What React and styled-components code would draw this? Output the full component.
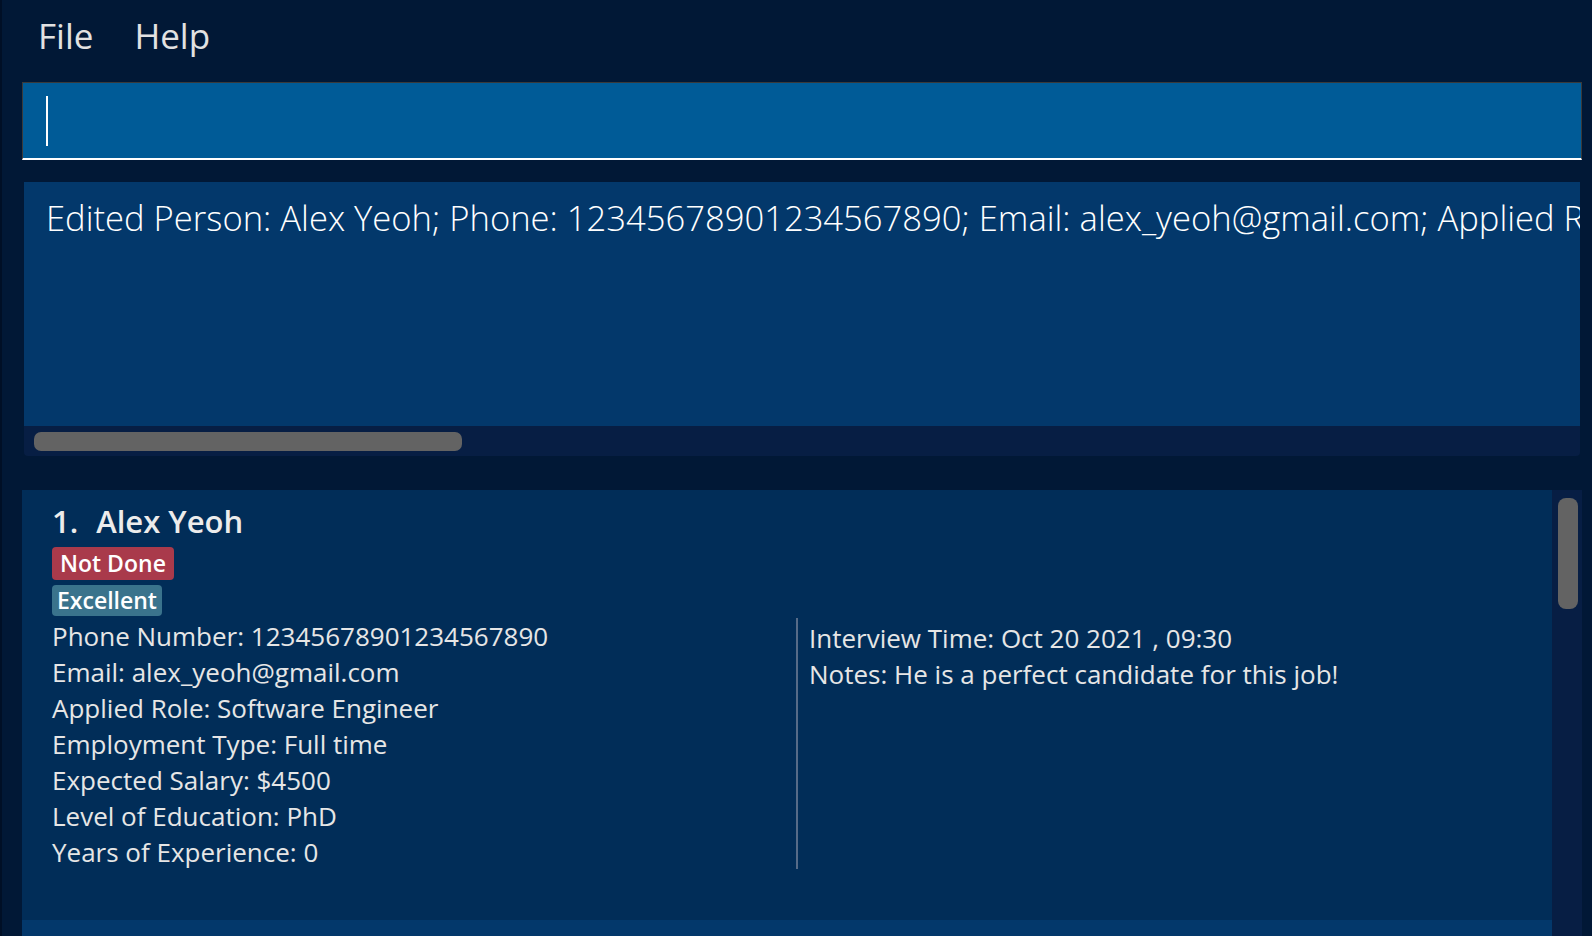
import React from "react";
import styled, { createGlobalStyle } from "styled-components";

const GlobalStyle = createGlobalStyle`
  html, body {
    margin: 0;
    padding: 0;
    background: #011836;
    overflow: hidden;
  }
  * {
    box-sizing: border-box;
  }
`;

const Window = styled.div`
  width: 1592px;
  height: 936px;
  background: #011836;
  border-left: 2px solid #000f26;
  display: flex;
  flex-direction: column;
  overflow: hidden;
`;

const MenuBar = styled.div`
  height: 72px;
  display: flex;
  align-items: flex-start;
  gap: 41px;
  padding: 8px 0 0 36px;
  font-family: "Open Sans", sans-serif;
  font-size: 35px;
  color: #e2e2e2;
`;

const MenuItem = styled.span`
  line-height: 56px;
`;

const CommandBox = styled.div`
  margin: 10px 10px 0 20px;
  height: 78px;
  background: #005b97;
  border: 1px solid #3a3a3a;
  border-bottom: 2px solid #ffffff;
  display: flex;
  align-items: center;
  padding-left: 23px;
`;

const Caret = styled.div`
  width: 2px;
  height: 50px;
  background: #ffffff;
`;

const ResultPanel = styled.div`
  margin: 22px 12px 0 22px;
  height: 274px;
  display: flex;
  flex-direction: column;
  border-radius: 0 0 4px 4px;
  overflow: hidden;
`;

const ResultText = styled.div`
  flex: 1;
  background: #03386b;
  padding: 12px 0 0 22px;
  font-family: "Open Sans", sans-serif;
  font-weight: 300;
  font-size: 34.6px;
  color: #ffffff;
  white-space: nowrap;
  overflow: hidden;
`;

const HScrollTrack = styled.div`
  height: 30px;
  background: #071e44;
  padding: 6px 10px 5px 10px;
`;

const HThumb = styled.div`
  height: 19px;
  width: 428px;
  border-radius: 7px;
  background: #636363;
`;

const ListPanel = styled.div`
  margin: 34px 10px 0 20px;
  flex: 1;
  display: flex;
  min-height: 0;
`;

const CardColumn = styled.div`
  flex: 1;
  display: flex;
  flex-direction: column;
`;

const Card = styled.div`
  background: ${(p) => (p.$odd ? "#03386b" : "#012d58")};
  height: ${(p) => p.$height}px;
  padding: 8px 0 0 30px;
  font-family: "Open Sans", sans-serif;
  color: #e6e6e6;
  flex-shrink: 0;
`;

const NameRow = styled.div`
  font-size: 31px;
  font-weight: 600;
  line-height: 46px;
  color: #ececec;
  display: flex;
`;

const Index = styled.span`
  margin-right: 18px;
`;

const Badge = styled.div`
  display: inline-block;
  background: ${(p) => p.$color};
  color: #ffffff;
  font-size: 23px;
  font-weight: 600;
  line-height: ${(p) => p.$h}px;
  padding: 0 ${(p) => p.$pad}px;
  border-radius: 4px;
  margin-bottom: 5px;
`;

const BadgeStack = styled.div`
  display: flex;
  flex-direction: column;
  align-items: flex-start;
  margin-top: 3px;
`;

const Details = styled.div`
  display: grid;
  grid-template-columns: 744px 2px 1fr;
  margin-top: -3px;
`;

const Column = styled.div`
  font-size: 26px;
  line-height: 36px;
  padding-top: ${(p) => p.$offset || 0}px;
  padding-left: ${(p) => p.$indent || 0}px;
`;

const Divider = styled.div`
  background: #566b88;
  height: 251px;
`;

const VScrollTrack = styled.div`
  width: 30px;
  background: #071e44;
  padding: 8px 4px 0 6px;
`;

const VThumb = styled.div`
  width: 20px;
  height: 111px;
  border-radius: 8px;
  background: #636363;
`;

const leftFields = [
  "Phone Number: 12345678901234567890",
  "Email: alex_yeoh@gmail.com",
  "Applied Role: Software Engineer",
  "Employment Type: Full time",
  "Expected Salary: $4500",
  "Level of Education: PhD",
  "Years of Experience: 0",
];

const rightFields = [
  "Interview Time: Oct 20 2021 , 09:30",
  "Notes: He is a perfect candidate for this job!",
];

export default function App() {
  return (
    <Window>
      <GlobalStyle />
      <MenuBar>
        <MenuItem>File</MenuItem>
        <MenuItem>Help</MenuItem>
      </MenuBar>
      <CommandBox>
        <Caret />
      </CommandBox>
      <ResultPanel>
        <ResultText>
          Edited Person: Alex Yeoh; Phone: 12345678901234567890; Email: alex_yeoh@gmail.com; Applied Role: Software Engineer; Employment Type: Full time
        </ResultText>
        <HScrollTrack>
          <HThumb />
        </HScrollTrack>
      </ResultPanel>
      <ListPanel>
        <CardColumn>
          <Card $height={430}>
            <NameRow>
              <Index>1.</Index>
              <span>Alex Yeoh</span>
            </NameRow>
            <BadgeStack>
              <Badge $color="#a93a4b" $h={33} $pad={8}>Not Done</Badge>
              <Badge $color="#3a738c" $h={31} $pad={5}>Excellent</Badge>
            </BadgeStack>
            <Details>
              <Column>
                {leftFields.map((f) => (
                  <div key={f}>{f}</div>
                ))}
              </Column>
              <Divider />
              <Column $offset={2} $indent={11}>
                {rightFields.map((f) => (
                  <div key={f}>{f}</div>
                ))}
              </Column>
            </Details>
          </Card>
          <Card $odd $height={200} />
        </CardColumn>
        <VScrollTrack>
          <VThumb />
        </VScrollTrack>
      </ListPanel>
    </Window>
  );
}
